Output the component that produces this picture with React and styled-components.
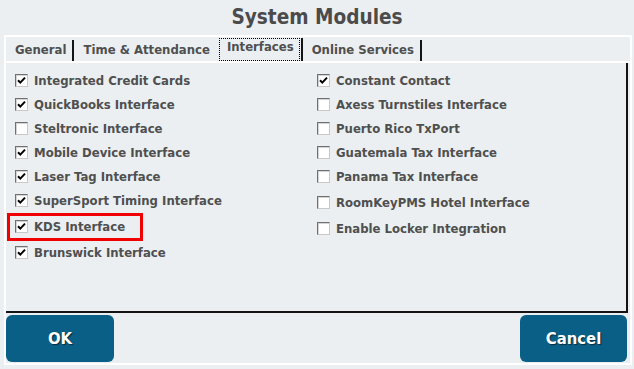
import React from "react";
import styled, { createGlobalStyle } from "styled-components";

const Global = createGlobalStyle`
  html, body { margin: 0; padding: 0; background: #ebeff2; }
  body { font-family: "DejaVu Sans Condensed", "DejaVu Sans", sans-serif; }
`;

const FONT = `"DejaVu Sans Condensed", "DejaVu Sans", sans-serif`;

const Window = styled.div`
  width: 634px;
  height: 369px;
  background: #ebeff2;
  display: flex;
  flex-direction: column;
  box-sizing: border-box;
`;

const Title = styled.h1`
  margin: 0;
  height: 35px;
  font-family: ${FONT};
  font-weight: bold;
  font-size: 20.6px;
  line-height: 35px;
  color: #4b4b4b;
  text-align: center;
`;

const Frame = styled.div`
  margin-left: 4px;
  width: 628px;
  height: 330px;
  box-sizing: border-box;
  border: 2px solid #ffffff;
  display: flex;
  flex-direction: column;
`;

const TabBar = styled.div`
  height: 24px;
  border-bottom: 2px solid #ffffff;
  display: flex;
  align-items: flex-end;
`;

const Tab = styled.div`
  position: relative;
  box-sizing: border-box;
  height: ${(p) => (p.$active ? 23 : 21)}px;
  padding: ${(p) => (p.$active ? "0 7px 0 9px" : "0 6px 0 9px")};
  border-right: 2px solid ${(p) => (p.$hideEdge ? "transparent" : "#141414")};
  font-family: ${FONT};
  font-weight: bold;
  font-size: 13px;
  line-height: ${(p) => (p.$active ? 17 : 19)}px;
  color: #4f4f4f;
  white-space: nowrap;
`;

const Focus = styled.span`
  position: absolute;
  left: 1px;
  right: 1px;
  top: 0;
  bottom: 0;
  border: 1px dotted #000;
  pointer-events: none;
`;

const Panel = styled.div`
  height: 250px;
  margin-right: 2px;
  border-right: 2px solid #141414;
  border-bottom: 2px solid #141414;
  box-sizing: border-box;
  padding: 5px 0 0 9px;
  display: grid;
  grid-template-columns: 302px 1fr;
  align-items: start;
`;

const Column = styled.div`
  display: flex;
  flex-direction: column;
`;

const Option = styled.label`
  position: relative;
  display: flex;
  align-items: center;
  gap: 6px;
  height: 24px;
  margin-top: ${(p) => (p.$shift ? 2 : 0)}px;
  font-family: ${FONT};
  font-weight: bold;
  font-size: 13px;
  color: #4f4f4f;
  white-space: nowrap;
`;

const Box = styled.span`
  width: 13px;
  height: 13px;
  box-sizing: border-box;
  background: #ffffff;
  border: 1px solid;
  border-color: #707070 #c8c8c8 #c8c8c8 #707070;
  box-shadow: inset 1px 1px 0 #d4d4d4;
  display: flex;
  align-items: center;
  justify-content: center;
  flex: none;
`;

const Highlight = styled.span`
  position: absolute;
  left: -8px;
  top: -1px;
  width: 136px;
  height: 28px;
  box-sizing: border-box;
  border: 3px solid #f00000;
  pointer-events: none;
`;

const Footer = styled.div`
  flex: 1;
  display: flex;
  justify-content: space-between;
  align-items: flex-start;
  padding: 2px 3px 0 0;
`;

const Button = styled.button`
  width: ${(p) => p.$w}px;
  height: 47px;
  border: none;
  border-radius: 6px;
  background: #0a5f86;
  color: #ffffff;
  font-family: ${FONT};
  font-weight: bold;
  font-size: 16.5px;
  text-shadow: 1px 1px 1px rgba(0, 0, 0, 0.55);
  padding: 0;
  cursor: pointer;
`;

const Check = () => (
  <svg width="9" height="9" viewBox="0 0 9 9">
    <path d="M1 4.2 L3.3 6.6 L8 1.6" fill="none" stroke="#000" strokeWidth="2" />
  </svg>
);

const CheckOption = ({ label, checked, shift, highlight }) => (
  <Option $shift={shift}>
    <Box>{checked && <Check />}</Box>
    {label}
    {highlight && <Highlight />}
  </Option>
);

const left = [
  { label: "Integrated Credit Cards", checked: true },
  { label: "QuickBooks Interface", checked: true },
  { label: "Steltronic Interface", checked: false },
  { label: "Mobile Device Interface", checked: true },
  { label: "Laser Tag Interface", checked: true },
  { label: "SuperSport Timing Interface", checked: true },
  { label: "KDS Interface", checked: true, shift: true, highlight: true },
  { label: "Brunswick Interface", checked: true, shift: true },
];

const right = [
  { label: "Constant Contact", checked: true },
  { label: "Axess Turnstiles Interface", checked: false },
  { label: "Puerto Rico TxPort", checked: false },
  { label: "Guatemala Tax Interface", checked: false },
  { label: "Panama Tax Interface", checked: false },
  { label: "RoomKeyPMS Hotel Interface", checked: false, shift: true },
  { label: "Enable Locker Integration", checked: false, shift: true },
];

const tabs = ["General", "Time & Attendance", "Interfaces", "Online Services"];
const activeIndex = 2;

export default function App() {
  return (
    <>
      <Global />
      <Window>
        <Title>System Modules</Title>
        <Frame>
          <TabBar>
            {tabs.map((t, i) => (
              <Tab key={t} $active={i === activeIndex} $hideEdge={i === activeIndex - 1}>
                {t}
                {i === activeIndex && <Focus />}
              </Tab>
            ))}
          </TabBar>
          <Panel>
            <Column>
              {left.map((o) => (
                <CheckOption key={o.label} {...o} />
              ))}
            </Column>
            <Column>
              {right.map((o) => (
                <CheckOption key={o.label} {...o} />
              ))}
            </Column>
          </Panel>
          <Footer>
            <Button $w={108}>OK</Button>
            <Button $w={107}>Cancel</Button>
          </Footer>
        </Frame>
      </Window>
    </>
  );
}
